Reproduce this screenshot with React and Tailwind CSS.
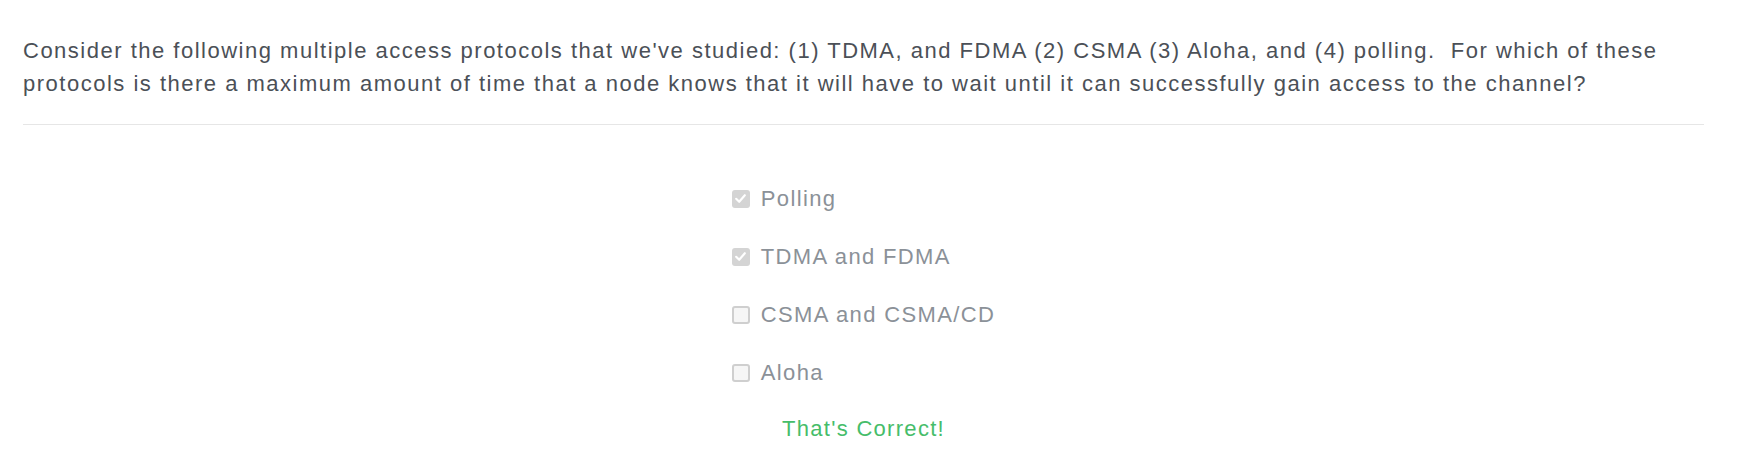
const OPTIONS = [
  { label: "Polling", checked: true },
  { label: "TDMA and FDMA", checked: true },
  { label: "CSMA and CSMA/CD", checked: false },
  { label: "Aloha", checked: false },
];

function Box({ checked }) {
  if (checked) {
    return (
      <span className="flex h-[18px] w-[18px] shrink-0 items-center justify-center rounded-[3px] bg-[#d4d4d4]">
        <svg width="13" height="13" viewBox="0 0 12 12" fill="none">
          <path
            d="M2 6.3 L4.8 9 L10 3"
            stroke="#ffffff"
            strokeWidth="2"
            strokeLinecap="round"
            strokeLinejoin="round"
          />
        </svg>
      </span>
    );
  }
  return (
    <span className="block h-[18px] w-[18px] shrink-0 rounded-[3px] border-2 border-[#cfcfcf] bg-[#f6f6f6]" />
  );
}

export default function App() {
  return (
    <div className="min-h-screen bg-white font-['Liberation_Sans',Arial,sans-serif]">
      <div className="ml-[23px] w-[1681px] pt-[34px]">
        <p className="text-[22px] leading-[33px] tracking-[1.5px] text-[#4b5057]">
          Consider the following multiple access protocols that we've studied: (1) TDMA, and FDMA (2) CSMA (3) Aloha, and (4) polling.&nbsp; For which of these protocols is there a maximum amount of time that a node knows that it will have to wait until it can successfully gain access to the channel?
        </p>

        <div className="mt-[24px] h-px bg-[#e6e6e6]" />

        <div className="flex flex-col items-center pt-[57px]">
          <div className="flex flex-col gap-[25px]">
            {OPTIONS.map((opt) => (
              <label key={opt.label} className="flex h-[33px] items-center gap-[11px]">
                <Box checked={opt.checked} />
                <span className="text-[22px] leading-[33px] tracking-[1.35px] text-[#8b9198]">
                  {opt.label}
                </span>
              </label>
            ))}
          </div>
          <p className="mt-[23px] text-[22px] leading-[33px] tracking-[1.3px] text-[#46bd6a]">
            That's Correct!
          </p>
        </div>
      </div>
    </div>
  );
}
